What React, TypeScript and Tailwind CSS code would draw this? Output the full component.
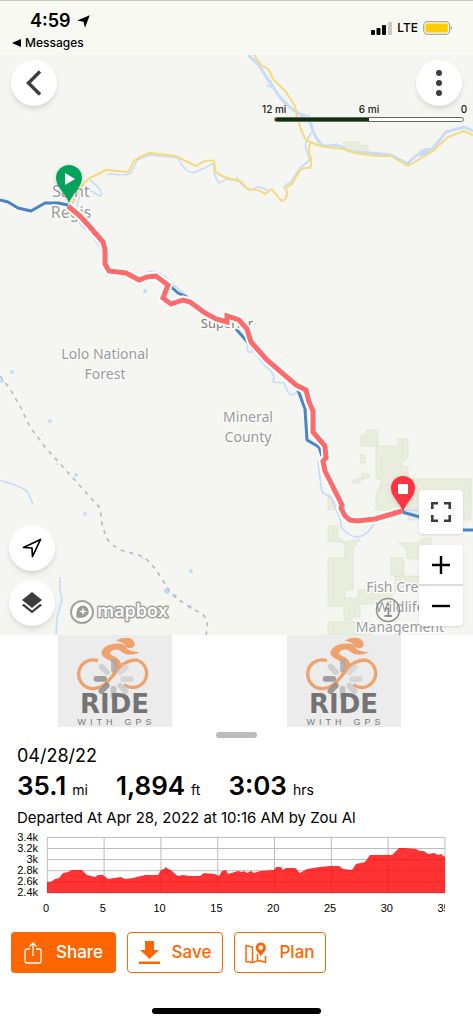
import { useState } from "react";

const ROUTE =
  "M68 206 L80 216 L90 227 L103 242 L105 250 L105 264 L109 271 L126 273 L139 280 L147 277 L156 276 L168 285 L163 298 L171 304 L183 300 L190 302 L205 313 L216 319 L227 322 L227 316 L239 320 L247 329 L251 342 L267 360 L296 385 L306 390 L309 402 L313 411 L313 432 L325 446 L326 458 L323 461 L325 471 L342 505 L341 508 L345 516 L350 520 L357 521 L375 519 L402 511";

const HIGHWAYS = [
  "M0 200 L8 202 L18 208 L31 211 L45 203 L58 203 L68 205",
  "M169 285 L178 293 L187 297",
  "M236 329 L244 338 L254 350",
  "M298 390 L305 409 L307 440 L319 447 L322 456",
  "M402 512 L420 517 L450 528 L464 530 L473 530",
];

const ROADS = [
  "M71 206 L80 190 Q85 180 92 177 L106 170 L128 172 Q131 168 133 162 Q140 156 150 153 L175 156 L196 166 Q206 159 214 161 Q215 165 215 171 Q222 178 236 180 L242 182 Q246 189 250 190 Q257 188 265 194 L272 189 Q280 200 282 201 Q289 199 286 187 L292 184 L300 170 Q306 167 310 168 Q313 162 309 152 Q308 146 311 143",
  "M254 55 L262 66 Q268 68 270 72 L273 79 L286 92 L295 106 L297 117 Q302 134 306 140 Q318 146 326 147 L343 149 L355 153 L376 156 L391 156 L408 166 L433 151 L448 137 L464 131 L473 135",
];

const RIVERS = [
  "M248 55 L256 62 L262 70 L270 83 L280 97 Q290 109 300 114 L310 122 L313 131 Q318 143 324 146 L337 145 L350 151 L391 155 L408 164 Q412 158 419 154 Q424 148 430 150 Q428 155 420 155 L433 148 Q440 140 446 132 L464 127 L473 131",
  "M266 85 L274 88 L270 80 M300 114 L310 116 M313 131 Q302 144 307 152 L310 160",
  "M310 160 L300 168 L290 183 Q282 185 285 190 M268 191 Q258 184 252 190 L243 186 L236 177",
  "M90 180 L98 187 Q104 195 100 196 L90 190 M80 194 L76 210 L80 224 L86 230",
  "M107 174 L126 175 L131 173 L137 160 L150 155 L178 158 Q186 175 195 172 L207 167 L214 163 Q213 176 219 183 L227 179 L238 181",
  "M92 235 L100 247 L103 262 L107 276 M122 276 L135 280 L148 272 Q160 269 170 282 L194 302",
  "M247 345 L248 352 L255 352 Q262 364 270 370 L274 376 L273 382 L284 383 L288 392 Q292 398 298 391",
  "M318 460 Q320 480 322 492 L331 498 L338 514 L341 522 L341 527 Q359 548 374 524 M402 511 Q410 509 418 511",
  "M0 480 L20 487 L27 491 L33 504 M60 577 L60 590 L62 600 L57 618 L56 635",
];

const FORESTS = [
  "M344 142 H360 V145 H368 V152 L360 152 L350 151 L343 146Z",
  "M361 435 H367 V430 H378 V446 H361Z",
  "M376 446 H398 V439 H408 V456 L400 465 L408 467 V479 H471 V520 H408 V510 H376 V495 L382 480 L376 478Z",
  "M361 455 H365 V463 H360Z",
  "M353 480 L362 478 V474 H369 V478 L362 479 L359 483 H352Z",
  "M328 494 L334 497 L336 510 H328Z",
  "M328 526 H338 V538 L345 542 L360 539 Q356 546 353 548 V590 H345 V598 H358 V590 H392 V604 H360 V617 H352 V620 H344 V606 H328 V558 H345 V543 L328 541Z",
  "M328 622 H371 V635 H328Z",
  "M391 558 H404 V575 H391Z",
  "M399 543 H417 L424 538 H431 V559 H408 L406 548Z",
  "M395 576 H420 V591 H395Z",
];

const PLACES = [
  { lines: ["Lolo National", "Forest"], x: 105, y: 359 },
  { lines: ["Mineral", "County"], x: 248, y: 422 },
  { lines: ["Fish Creek", "Wildlife", "Management"], x: 400, y: 592 },
];

const LAKES = [
  [2, 381, 2],
  [12, 372, 2],
  [50, 421, 2],
  [42, 434, 1],
  [57, 464, 1],
  [76, 475, 2],
  [85, 514, 2],
  [191, 571, 2],
  [167, 591, 3],
  [175, 596, 2],
  [190, 607, 2],
  [142, 558, 1],
  [145, 291, 2],
];

function MapCanvas() {
  return (
    <svg
      viewBox="0 55 473 580"
      preserveAspectRatio="xMidYMid slice"
      className="block w-full h-full"
      role="img"
      aria-label="Route from Saint Regis to Fish Creek"
    >
      <g fill="#e8eddd" stroke="#dbe3cb" strokeDasharray="2 1">
        {FORESTS.map((d) => (
          <path key={d} d={d} />
        ))}
      </g>
      <g fill="none" stroke="#c8dcfa" strokeLinejoin="round">
        {RIVERS.map((d, i) => (
          <path key={d} d={d} strokeWidth={i === 0 ? 3 : 1.7} />
        ))}
      </g>
      {LAKES.map(([x, y, r]) => (
        <circle key={`${x}-${y}`} cx={x} cy={y} r={r} fill="#c2dbfb" />
      ))}
      <path
        d="M0 376 L10 389 L20 406 L30 427 L45 447 L100 508 L102 524 L106 537 Q112 547 124 551 L142 556 Q152 563 160 576 L170 592 Q178 600 190 607 L202 614 Q210 620 206 635"
        fill="none"
        stroke="#b8b6c2"
        strokeWidth="1.6"
        strokeDasharray="4 5"
      />
      <g fill="none" stroke="#f6da7d" strokeWidth="2" strokeLinejoin="round">
        {ROADS.map((d) => (
          <path key={d} d={d} />
        ))}
      </g>
      <g fill="none" stroke="#4a84c2" strokeWidth="3" strokeLinejoin="round">
        {HIGHWAYS.map((d) => (
          <path key={d} d={d} />
        ))}
      </g>
      <g
        textAnchor="middle"
        stroke="#fbfbf9"
        strokeWidth="3"
        paintOrder="stroke"
        strokeLinejoin="round"
        className="font-['Noto_Sans',sans-serif] text-[14px]"
      >
        <g fill="#9a9b9d" className="text-[16px]">
          <text x="71" y="197">
            Saint
          </text>
          <text x="71" y="218">
            Regis
          </text>
        </g>
        {PLACES.map((p) =>
          p.lines.map((line, i) => (
            <text key={line} x={p.x} y={p.y + i * 20} fill="#9a9b9d">
              {line}
            </text>
          ))
        )}
        <text x="227" y="328" fill="#77787a" className="text-[13px]">
          Superior
        </text>
      </g>
      <path d={ROUTE} fill="none" stroke="#fff" strokeWidth="9" />
      <path d={ROUTE} fill="none" stroke="#ff6b6b" strokeWidth="5" />
      {/* start and finish pins */}
      <path
        d="M69 203 C66 194 56 187 56 178 A13 13 0 0 1 82 178 C82 187 72 194 69 203Z"
        fill="#04a35c"
        className="drop-shadow-sm"
      />
      <path d="M65 173 L75 179 L65 185Z" fill="#fff" />
      <path
        d="M403 512 C400 502 391 497 391 488 A12 12 0 0 1 415 488 C415 497 406 502 403 512Z"
        fill="#ff3341"
        className="drop-shadow-sm"
      />
      <rect x="398" y="484" width="10" height="10" fill="#fff" />
    </svg>
  );
}

function StatusBar() {
  return (
    <header className="h-[55px] bg-[#f8f9f2] border-t border-[#c9cac5] flex items-start justify-between pl-3 pr-5">
      <div>
        <div className="flex items-center gap-[6px] pl-[18px] pt-2 h-8 text-[18px] leading-6 font-semibold">
          4:59
          <svg width="13" height="13" viewBox="0 0 12 12">
            <path d="M11.8 .2 L7.4 11.8 L6 6.2 L.2 5Z" fill="#000" />
          </svg>
        </div>
        <a href="#messages" className="flex items-center gap-1 text-[12px] leading-5 font-medium">
          <svg width="9" height="8" viewBox="0 0 9 8">
            <path d="M0 4 L9 0 V8Z" fill="#000" />
          </svg>
          Messages
        </a>
      </div>
      <div className="flex items-center gap-[5px] mt-[17px] text-[12px] leading-5 font-medium">
        <svg width="21" height="13" viewBox="0 0 21 13">
          <rect x="0" y="8" width="4" height="5" rx="1" />
          <rect x="5.5" y="6" width="4" height="7" rx="1" />
          <rect x="11" y="3" width="4" height="10" rx="1" />
          <rect x="17" y="0" width="4" height="13" rx="1" fill="#c8c9c3" />
        </svg>
        LTE
        <svg width="30" height="14" viewBox="0 0 30 14">
          <rect x=".7" y=".7" width="26" height="12.6" rx="4" fill="none" stroke="#a9aaa5" strokeWidth="1.3" />
          <rect x="2.5" y="2.5" width="22.4" height="9" rx="2" fill="#ffcc00" />
          <path d="M28 5 Q30 7 28 9Z" fill="#999a95" />
        </svg>
      </div>
    </header>
  );
}

function ScaleBar() {
  return (
    <div className="w-[190px] text-[10px] leading-4 font-medium text-[#222]">
      <div className="flex justify-between -mx-3 text-center whitespace-nowrap">
        <span className="w-6">12 mi</span>
        <span className="w-6">6 mi</span>
        <span className="w-6">0</span>
      </div>
      <div className="h-[5px] rounded-full border border-[#5a6f5c] bg-white overflow-hidden">
        <div className="w-1/2 h-full bg-[#12300f]" />
      </div>
    </div>
  );
}

const roundButton =
  "w-[46px] h-[46px] rounded-full bg-white shadow-md flex items-center justify-center";

function RideMap() {
  return (
    <section className="relative h-[580px] bg-[#f5f6f1] overflow-hidden">
      <MapCanvas />
      <div className="absolute inset-0 flex flex-col justify-between">
        <div>
          <div className="flex justify-between pt-[5px] px-[11px]">
            <button aria-label="Back" className={roundButton}>
              <svg width="16" height="26" viewBox="0 0 16 26" fill="none" stroke="#3d3d3d" strokeWidth="3.4">
                <path d="M14 1.5 L2.5 13 L14 24.5" />
              </svg>
            </button>
            <button aria-label="More" className={roundButton}>
              <svg width="6" height="26" viewBox="0 0 6 26" fill="#3d3d3d">
                <circle cx="3" cy="3" r="3" />
                <circle cx="3" cy="13" r="3" />
                <circle cx="3" cy="23" r="3" />
              </svg>
            </button>
          </div>
          <div className="flex justify-end -mt-[5px] pr-[9px]">
            <ScaleBar />
          </div>
        </div>
        <div className="flex items-end justify-between pl-[9px] pr-[10px] pb-[9px]">
          <div className="flex items-end gap-[15px]">
            <div className="flex flex-col gap-[9px]">
              <button aria-label="My location" className={roundButton}>
                <svg width="20" height="20" viewBox="0 0 20 20" fill="none" stroke="#000" strokeWidth="1.7" strokeLinejoin="round">
                  <path d="M18.5 1.5 L10.5 18.5 L10 10 L1.5 9.5Z" />
                </svg>
              </button>
              <button aria-label="Layers" className={roundButton}>
                <svg width="20" height="22" viewBox="0 0 20 22" fill="#3d3d3d">
                  <path d="M10 0 L20 8 L10 16 L0 8Z" />
                  <path d="M0 13.2 L1.8 11.8 L10 18.4 L18.2 11.8 L20 13.2 L10 21.3Z" />
                </svg>
              </button>
            </div>
            <a href="#mapbox" aria-label="mapbox">
              <svg width="104" height="28" viewBox="0 0 104 28">
                <circle cx="12" cy="14" r="11" fill="#fff" stroke="#a2a39f" strokeWidth="2" />
                <path d="M6.5 19.5 C5.5 11 9 7.5 13 7.500 A6 6 0 0 1 17.500 17 C14 20.500 10 20 6.500 19.500Z" fill="#9a9b97" />
                <path d="M13 9.500 L14 12.400 L17 13.400 L14 14.400 L13 17.300 L12 14.400 L9 13.400 L12 12.400Z" fill="#fff" />
                <text
                  x="27"
                  y="19"
                  fill="#fff"
                  stroke="#a2a39f"
                  strokeWidth="3"
                  strokeLinejoin="round"
                  paintOrder="stroke"
                  className="font-['Open_Sans',sans-serif] text-[18px] font-semibold"
                >
                  mapbox
                </text>
              </svg>
            </a>
          </div>
          <div className="flex items-end gap-[18px]">
            <button aria-label="Map info" className="mb-[3px]">
              <svg width="26" height="26" viewBox="0 0 26 26" fill="none" stroke="#8f908d" strokeWidth="1.5">
                <circle cx="13" cy="13" r="11.5" />
                <path d="M10 11.5 H13.5 V19 M9.5 19 H17" strokeWidth="1.8" />
                <circle cx="13" cy="7.5" r="1.3" fill="#8f908d" stroke="none" />
              </svg>
            </button>
            <div className="flex flex-col gap-[11px]">
              <button aria-label="Full screen" className="w-11 h-11 rounded-sm bg-white shadow flex items-center justify-center">
                <svg width="20" height="20" viewBox="0 0 20 20" fill="none" stroke="#3d3d3d" strokeWidth="2.6">
                  <path d="M1.3 7 V1.3 H7 M13 1.3 H18.7 V7 M18.7 13 V18.7 H13 M7 18.7 H1.3 V13" />
                </svg>
              </button>
              <div className="flex flex-col gap-[2px] bg-[#dcdcdc] rounded-sm shadow">
                <button aria-label="Zoom in" className="w-11 h-[39px] rounded-t-sm bg-white flex items-center justify-center">
                  <svg width="18" height="18" viewBox="0 0 18 18" stroke="#000" strokeWidth="2.4">
                    <path d="M9 0 V18 M0 9 H18" />
                  </svg>
                </button>
                <button aria-label="Zoom out" className="w-11 h-[40px] rounded-b-sm bg-white flex items-center justify-center">
                  <svg width="18" height="18" viewBox="0 0 18 18" stroke="#000" strokeWidth="2.4">
                    <path d="M0 9 H18" />
                  </svg>
                </button>
              </div>
            </div>
          </div>
        </div>
      </div>
    </section>
  );
}

const SPOKES = [
  { angle: 0, color: "#a9a9a6" },
  { angle: 45, color: "#d3d3d3" },
  { angle: 90, color: "#cfcfcf" },
  { angle: 135, color: "#c8c8c8" },
  { angle: 180, color: "#b5b5b5" },
  { angle: 225, color: "#858585" },
  { angle: 270, color: "#8b8b8b" },
  { angle: 315, color: "#c9c9c9" },
];

function PhotoPlaceholder() {
  return (
    <div className="w-[114px] h-[92px] bg-[#ececec] flex flex-col items-center">
      <svg width="114" height="56" viewBox="0 0 342 168" className="block overflow-visible">
        <path
          d="M116 76 A43 43 0 1 0 112 160 Q138 157 158 130 L182 100 Q204 75 236 75 A42 42 0 1 1 202 151"
          fill="none"
          stroke="#eea36f"
          strokeWidth="10"
          strokeLinecap="round"
        />
        <path
          d="M190 26 Q150 24 135 42 Q124 58 140 68 L162 80 Q174 90 166 106 L158 126 L166 128 L185 104 Q196 82 178 70 L156 57 Q154 48 170 44 Q184 42 192 52 Q218 68 247 50 Q225 54 208 42 Q200 28 190 26Z"
          fill="#eea36f"
        />
        <path d="M173 17 Q190 6 212 9 Q232 14 230 33 Q216 46 201 34 Q199 20 173 17Z" fill="#eea36f" />
        {SPOKES.map((s) => (
          <rect
            key={s.angle}
            x="159"
            y="72"
            width="17"
            height="40"
            rx="8"
            fill={s.color}
            opacity=".8"
            transform={`rotate(${s.angle} 167 132)`}
          />
        ))}
      </svg>
      <div className="font-['DejaVu_Sans',sans-serif] font-bold text-[26px] leading-[26px] text-[#747474]">
        RIDE
      </div>
      <div className="flex justify-between w-[74px] font-['Liberation_Sans',sans-serif] text-[9px] leading-[10px] text-[#777]">
        {["W", "I", "T", "H"].map((c) => (
          <span key={c}>{c}</span>
        ))}
        <span className="w-1" />
        {["G", "P", "S"].map((c) => (
          <span key={c}>{c}</span>
        ))}
      </div>
    </div>
  );
}

const STATS = [
  { value: "35.1", unit: "mi" },
  { value: "1,894", unit: "ft" },
  { value: "3:03", unit: "hrs" },
];

const ELEVATION =
  "M47 882 L51 882 L55 879 L59 878 L63 873 L68 872 L72 870 L78 870 L82 870 L87 875 L95 877 L98 875 L103 875 L108 879 L114 878 L121 877 L125 879 L133 878 L145 875 L158 875 L161 870 L164 869 L166 867 L168 869 L171 870 L174 873 L178 876 L183 875 L190 876 L200 876 L204 873 L215 874 L219 876 L222 871 L226 870 L228 874 L238 871 L242 872 L244 871 L247 873 L251 871 L254 873 L260 871 L274 870 L276 867 L281 867 L283 870 L286 868 L295 868 L297 870 L300 873 L307 869 L320 867 L330 866 L339 866 L343 869 L352 870 L356 864 L365 862 L370 855 L392 855 L394 853 L399 848 L404 848 L416 849 L420 851 L424 851 L428 854 L434 853 L438 855 L441 854 L445 857 V893 H47Z";

function ElevationChart() {
  const yLabels = ["3.4k", "3.2k", "3k", "2.8k", "2.6k", "2.4k"];
  const xLabels = [0, 5, 10, 15, 20, 25, 30, 35];
  return (
    <svg
      viewBox="0 830 473 90"
      className="block w-full font-['Liberation_Sans',sans-serif] text-[11px]"
      role="img"
      aria-label="Elevation profile"
    >
      <defs>
        <clipPath id="plot">
          <rect x="0" y="830" width="445" height="90" />
        </clipPath>
      </defs>
      <g stroke="#bdbdbd">
        {yLabels.map((label, i) => (
          <path key={label} d={`M47 ${837.4 + i * 11.1} H445`} />
        ))}
        {xLabels.map((mi) => (
          <path key={mi} d={`M${47.3 + mi * 11.36} 837 V893`} />
        ))}
      </g>
      <path d={ELEVATION} fill="#ff0000" fillOpacity=".8" />
      {yLabels.map((label, i) => (
        <text key={label} x="38" y={841 + i * 11} textAnchor="end">
          {label}
        </text>
      ))}
      <g clipPath="url(#plot)" textAnchor="middle">
        {xLabels.map((mi) => (
          <text key={mi} x={46 + mi * 11.36} y="912">
            {mi}
          </text>
        ))}
      </g>
    </svg>
  );
}

export default function App() {
  const [saved, setSaved] = useState(false);

  return (
    <div className="min-h-screen flex flex-col bg-white text-black font-['Inter',sans-serif]">
      <StatusBar />
      <RideMap />
      <main className="flex-1 flex flex-col">
        <div className="grid grid-cols-2 justify-items-center mr-[15px]">
          <PhotoPlaceholder />
          <PhotoPlaceholder />
        </div>
        <div className="self-center w-[41px] h-[6px] mt-[5px] rounded-full bg-[#bcbcbc]" />

        <div className="pl-[17px] pt-[6px] pb-[2px]">
          <h1 className="text-[18px] leading-6">04/28/22</h1>
          <div className="flex gap-7 leading-9">
            {STATS.map((s) => (
              <p key={s.unit} className="flex items-baseline gap-[6px]">
                <span className="text-[26px] font-semibold">{s.value}</span>
                <span className="text-[14px]">{s.unit}</span>
              </p>
            ))}
          </div>
          <p className="text-[15px] leading-5">
            Departed At Apr 28, 2022 at 10:16 AM by Zou Al
          </p>
        </div>

        <ElevationChart />

        <div className="flex gap-[11px] pl-[11px] pt-3 text-[17px] font-medium text-[#ff6600]">
          <button className="w-[105px] h-[41px] rounded bg-[#ff6600] text-white flex items-center justify-center gap-[14px]">
            <svg width="18" height="22" viewBox="0 0 18 22" fill="none" stroke="currentColor" strokeWidth="1.3">
              <path d="M6 7 H3 Q1 7 1 9 V19 Q1 21 3 21 H15 Q17 21 17 19 V9 Q17 7 15 7 H12 M9 14 V1.5 M5.5 4.5 L9 1 L12.5 4.5" />
            </svg>
            Share
          </button>
          <button
            onClick={() => setSaved(!saved)}
            aria-pressed={saved}
            className="w-[96px] h-[41px] rounded border border-[#ff6600] flex items-center justify-center gap-3"
          >
            <svg width="21" height="23" viewBox="0 0 21 23" fill="currentColor">
              <path d="M6 0 H15 V9 H20 L10.5 18 L1 9 H6Z" />
              <rect y="20.5" width="21" height="2.5" />
            </svg>
            Save
          </button>
          <button className="w-[92px] h-[41px] rounded border border-[#ff6600] flex items-center justify-center gap-3">
            <svg width="22" height="22" viewBox="0 0 22 22" fill="none" stroke="currentColor" strokeWidth="1.5">
              <path d="M1 3.5 L7.5 5 V20.5 L1 19.5Z M7.5 20.5 L14 18.5 L20.5 20.5 V14 M12.5 12 V18.5" />
              <path
                d="M15.8 14.5 C14 11 10.7 9 10.7 5.5 A5.1 5.1 0 0 1 20.9 5.5 C20.9 9 17.5 11 15.8 14.5Z M15.8 3.2 A2.3 2.3 0 1 0 15.8 7.8 A2.3 2.3 0 1 0 15.8 3.2Z"
                fill="currentColor"
                fillRule="evenodd"
                stroke="none"
              />
            </svg>
            Plan
          </button>
        </div>

        <div className="self-center w-[169px] h-[6px] mt-auto mb-[9px] rounded-full bg-black" />
      </main>
    </div>
  );
}
